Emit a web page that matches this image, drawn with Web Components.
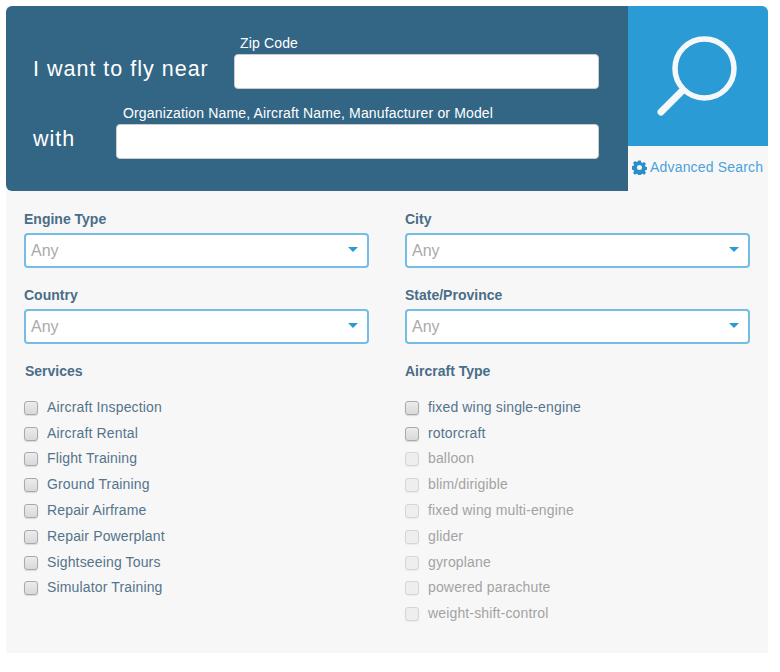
<!DOCTYPE html>
<html>
<head>
<meta charset="utf-8">
<title>Search</title>
<style>
    html, body { margin: 0; background: #fff; }
    body { padding: 6px 12px 0 6px; font-family: "Liberation Sans", Arial, sans-serif; }
</style>
</head>
<body>
<search-panel>
    <search-hero slot="hero"></search-hero>
    <filter-select label="Engine Type"></filter-select>
    <filter-select label="City"></filter-select>
    <filter-select label="Country"></filter-select>
    <filter-select label="State/Province"></filter-select>
    <check-group label="Services">
        <check-item>Aircraft Inspection</check-item>
        <check-item>Aircraft Rental</check-item>
        <check-item>Flight Training</check-item>
        <check-item>Ground Training</check-item>
        <check-item>Repair Airframe</check-item>
        <check-item>Repair Powerplant</check-item>
        <check-item>Sightseeing Tours</check-item>
        <check-item>Simulator Training</check-item>
    </check-group>
    <check-group label="Aircraft Type" class="right">
        <check-item>fixed wing single-engine</check-item>
        <check-item>rotorcraft</check-item>
        <check-item disabled>balloon</check-item>
        <check-item disabled>blim/dirigible</check-item>
        <check-item disabled>fixed wing multi-engine</check-item>
        <check-item disabled>glider</check-item>
        <check-item disabled>gyroplane</check-item>
        <check-item disabled>powered parachute</check-item>
        <check-item disabled>weight-shift-control</check-item>
    </check-group>
</search-panel>

<script>
// outer panel: hero on top, filters in two columns below
class SearchPanel extends HTMLElement {
    constructor() {
        super();
        this.attachShadow({ mode: 'open' });
        this.shadowRoot.innerHTML = `
            <style>
                :host { display: block; width: 762px; height: 647px; background: #f7f7f7; }
                .filters {
                    display: grid;
                    grid-template-columns: 345px 345px;
                    column-gap: 36px;
                    row-gap: 19px;
                    padding: 20px 18px 0;
                }
            </style>
            <slot name="hero"></slot>
            <div class="filters"><slot></slot></div>
        `;
    }
}

// dark search block with the two text fields and the big search button
class SearchHero extends HTMLElement {
    constructor() {
        super();
        this.attachShadow({ mode: 'open' });
        this.shadowRoot.innerHTML = `
            <style>
                :host { display: grid; grid-template-columns: 622px 140px; height: 185px; color: #fff; }
                .main {
                    background: #336685;
                    border-radius: 6px 0 0 6px;
                    padding: 29px 29px 0 27px;
                    box-sizing: border-box;
                    display: flex;
                    flex-direction: column;
                    gap: 16px;
                }
                .row { display: flex; align-items: flex-end; }
                .lead { font-size: 21.5px; letter-spacing: 1px; line-height: 35px; padding-bottom: 2px; white-space: nowrap; }
                .first .lead { width: 201px; }
                .second .lead { width: 83px; }
                .field { flex: 1; }
                .field span { display: block; font-size: 14px; letter-spacing: 0.15px; line-height: 16px; margin-bottom: 3px; white-space: nowrap; }
                .first .field span { margin-left: 6px; }
                .second .field span { margin-left: 7px; }
                .field i {
                    display: block;
                    height: 35px;
                    box-sizing: border-box;
                    background: #fff;
                    border: 1px solid #ccc;
                    border-radius: 4px;
                }
                .side { display: flex; flex-direction: column; }
                .go {
                    height: 140px;
                    background: #2a9bd4;
                    border-top-right-radius: 6px;
                    display: flex;
                    align-items: center;
                    justify-content: center;
                }
                .go svg { display: block; }
                .advanced {
                    flex: 1;
                    display: flex;
                    align-items: center;
                    gap: 3px;
                    padding: 0 0 3px 4px;
                    color: #4aa3da;
                    font-size: 14px;
                    letter-spacing: 0.18px;
                    white-space: nowrap;
                }
            </style>
            <div class="main">
                <div class="row first">
                    <div class="lead">I want to fly near</div>
                    <label class="field"><span>Zip Code</span><i></i></label>
                </div>
                <div class="row second">
                    <div class="lead">with</div>
                    <label class="field"><span>Organization Name, Aircraft Name, Manufacturer or Model</span><i></i></label>
                </div>
            </div>
            <div class="side">
                <div class="go">
                    <svg width="140" height="140" viewBox="0 0 140 140" fill="none" stroke="#f5f7f8">
                        <circle cx="76.5" cy="62.5" r="29.5" stroke-width="5.5"/>
                        <path d="M54 85 L33 106" stroke-width="7" stroke-linecap="round"/>
                    </svg>
                </div>
                <div class="advanced">
                    <svg width="15" height="15" viewBox="0 0 16 16" fill="#2a8fc9">
                        <path fill-rule="evenodd" d="M6.6 0.5h2.8l.4 2 1.3.6 1.8-1.1 2 2-1.1 1.8.6 1.3 2 .4v2.8l-2 .4-.6 1.3 1.1 1.8-2 2-1.8-1.1-1.3.6-.4 2H6.6l-.4-2-1.3-.6-1.8 1.1-2-2 1.1-1.8-.6-1.3-2-.4V6.6l2-.4.6-1.3L1.1 3.1l2-2 1.8 1.1 1.3-.6z M8 5.3a2.7 2.7 0 1 0 0 5.4 2.7 2.7 0 0 0 0-5.4z"/>
                    </svg>
                    <span>Advanced Search</span>
                </div>
            </div>
        `;
    }
}

// labelled dropdown, always showing the placeholder
class FilterSelect extends HTMLElement {
    constructor() {
        super();
        this.attachShadow({ mode: 'open' });
        this.shadowRoot.innerHTML = `
            <style>
                :host { display: block; }
                .label { font-size: 14px; font-weight: bold; color: #4a6d88; line-height: 16px; margin-bottom: 6px; }
                .box {
                    height: 35px;
                    box-sizing: border-box;
                    background: #fff;
                    border: 2px solid #74bde6;
                    border-radius: 4px;
                    display: flex;
                    align-items: center;
                    justify-content: space-between;
                    padding: 1px 9px 0 5px;
                    font-size: 16px;
                    color: #aaa;
                }
                .caret { width: 0; height: 0; border: 5px solid transparent; border-top: 5px solid #2a9bd4; border-bottom: 0; margin-top: -4px; }
            </style>
            <div class="label"></div>
            <div class="box"><span>Any</span><span class="caret"></span></div>
        `;
        this.shadowRoot.querySelector('.label').textContent = this.getAttribute('label');
    }
}

class CheckGroup extends HTMLElement {
    constructor() {
        super();
        this.attachShadow({ mode: 'open' });
        this.shadowRoot.innerHTML = `
            <style>
                :host { display: block; }
                .label { font-size: 14px; font-weight: bold; color: #4a6d88; line-height: 16px; margin: 0 0 15px 1px; }
                :host(.right) .label { margin-left: 0; }
                .list { display: flex; flex-direction: column; gap: 0; }
            </style>
            <div class="label"></div>
            <div class="list"><slot></slot></div>
        `;
        this.shadowRoot.querySelector('.label').textContent = this.getAttribute('label');
    }
}

class CheckItem extends HTMLElement {
    constructor() {
        super();
        this.attachShadow({ mode: 'open' });
        this.shadowRoot.innerHTML = `
            <style>
                :host { display: flex; align-items: center; gap: 9px; height: 25.8px; font-size: 14px; color: #54748c; letter-spacing: 0.15px; }
                :host([disabled]) { color: #a3a3a3; }
                .tick {
                    width: 12px;
                    height: 12px;
                    margin-top: 2px;
                    border: 1px solid #a9a9a9;
                    border-radius: 3px;
                    background: linear-gradient(#ececec, #d9d9d9);
                    box-shadow: 0 1px 1px rgba(0,0,0,.12);
                    flex: none;
                }
                :host([disabled]) .tick { border-color: #d6d6d6; background: #eeeeee; box-shadow: 0 1px 1px rgba(0,0,0,.05); }
            </style>
            <span class="tick"></span><span><slot></slot></span>
        `;
    }
}

customElements.define('search-panel', SearchPanel);
customElements.define('search-hero', SearchHero);
customElements.define('filter-select', FilterSelect);
customElements.define('check-group', CheckGroup);
customElements.define('check-item', CheckItem);
</script>
</body>
</html>
